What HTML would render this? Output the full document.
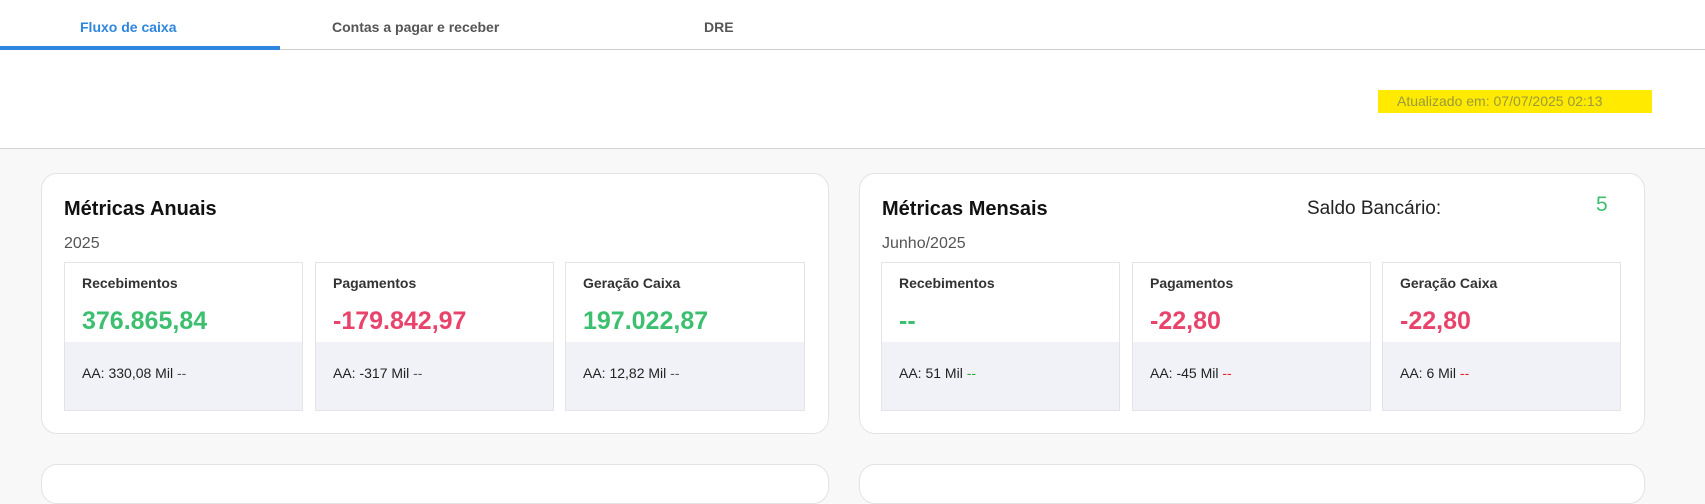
<!DOCTYPE html>
<html><head><meta charset="utf-8"><style>
*{box-sizing:border-box;margin:0;padding:0}
body{width:1705px;height:472px;overflow:hidden;background:#f8f8f8;font-family:"Liberation Sans",sans-serif;position:relative}
.top{position:absolute;left:0;top:0;width:1705px;height:149px;background:#fff;border-bottom:1px solid #d4d4d4}
.tabline{position:absolute;left:0;top:49px;width:1705px;height:1px;background:#ccc}
.ul{position:absolute;left:0;top:46px;width:280px;height:4px;background:#2e86de}
.tab{position:absolute;top:19px;font-size:14px;font-weight:bold;color:#555}
.badge{position:absolute;left:1378px;top:90px;width:274px;height:23px;background:#ffea00;color:#9a9a3a;font-size:14px;line-height:23px;padding-left:19px}
.card{position:absolute;top:173px;height:261px;background:#fff;border:1px solid #e3e3e3;border-radius:16px}
.card2{position:absolute;top:464px;height:40px;background:#fff;border:1px solid #e3e3e3;border-radius:16px}
.title{position:absolute;left:22px;top:24px;font-size:20px;font-weight:bold;color:#111}
.sub{position:absolute;left:22px;top:61px;font-size:16px;color:#555}
.m{position:absolute;top:88px;width:239px;height:149px;border:1px solid #e2e4e8;background:#f0f2f7}
.m .w{position:absolute;left:0;top:0;right:0;height:79px;background:#fff}
.m .l{position:absolute;left:17px;top:12px;font-size:14px;font-weight:bold;color:#333}
.m .v{position:absolute;left:17px;top:44px;font-size:25px;font-weight:bold}
.m .a{position:absolute;left:17px;top:102px;font-size:14px;color:#222}
.g{color:#3cbf6f}.r{color:#e8436a}.gd{color:#3a3}.rd{color:#e22}
</style></head><body>
<div class="top">
<div class="tabline"></div><div class="ul"></div>
<div class="tab" style="left:80px;color:#2e86de">Fluxo de caixa</div>
<div class="tab" style="left:332px">Contas a pagar e receber</div>
<div class="tab" style="left:704px">DRE</div>
<div class="badge">Atualizado em: 07/07/2025 02:13</div>
</div>

<div class="card" style="left:41px;width:788px">
<div class="title">Métricas Anuais</div>
<div class="sub">2025</div>
<div class="m" style="left:22px"><div class="w"></div><div class="l">Recebimentos</div><div class="v g">376.865,84</div><div class="a">AA: 330,08 Mil <span class="gd" style="color:#555">--</span></div></div>
<div class="m" style="left:273px"><div class="w"></div><div class="l">Pagamentos</div><div class="v r">-179.842,97</div><div class="a">AA: -317 Mil <span style="color:#555">--</span></div></div>
<div class="m" style="left:523px;width:240px"><div class="w"></div><div class="l">Geração Caixa</div><div class="v g">197.022,87</div><div class="a">AA: 12,82 Mil <span style="color:#555">--</span></div></div>
</div>

<div class="card" style="left:859px;width:786px">
<div class="title">Métricas Mensais</div>
<div style="position:absolute;left:447px;top:24px;font-size:19px;color:#222">Saldo Bancário:</div>
<div style="position:absolute;left:736px;top:19px;font-size:21px;color:#3cbf6f">5</div>
<div class="sub">Junho/2025</div>
<div class="m" style="left:21px"><div class="w"></div><div class="l">Recebimentos</div><div class="v g">--</div><div class="a">AA: 51 Mil <span class="gd">--</span></div></div>
<div class="m" style="left:272px"><div class="w"></div><div class="l">Pagamentos</div><div class="v r">-22,80</div><div class="a">AA: -45 Mil <span class="rd">--</span></div></div>
<div class="m" style="left:522px"><div class="w"></div><div class="l">Geração Caixa</div><div class="v r">-22,80</div><div class="a">AA: 6 Mil <span class="rd">--</span></div></div>
</div>

<div class="card2" style="left:41px;width:788px"></div>
<div class="card2" style="left:859px;width:786px"></div>
</body></html>
